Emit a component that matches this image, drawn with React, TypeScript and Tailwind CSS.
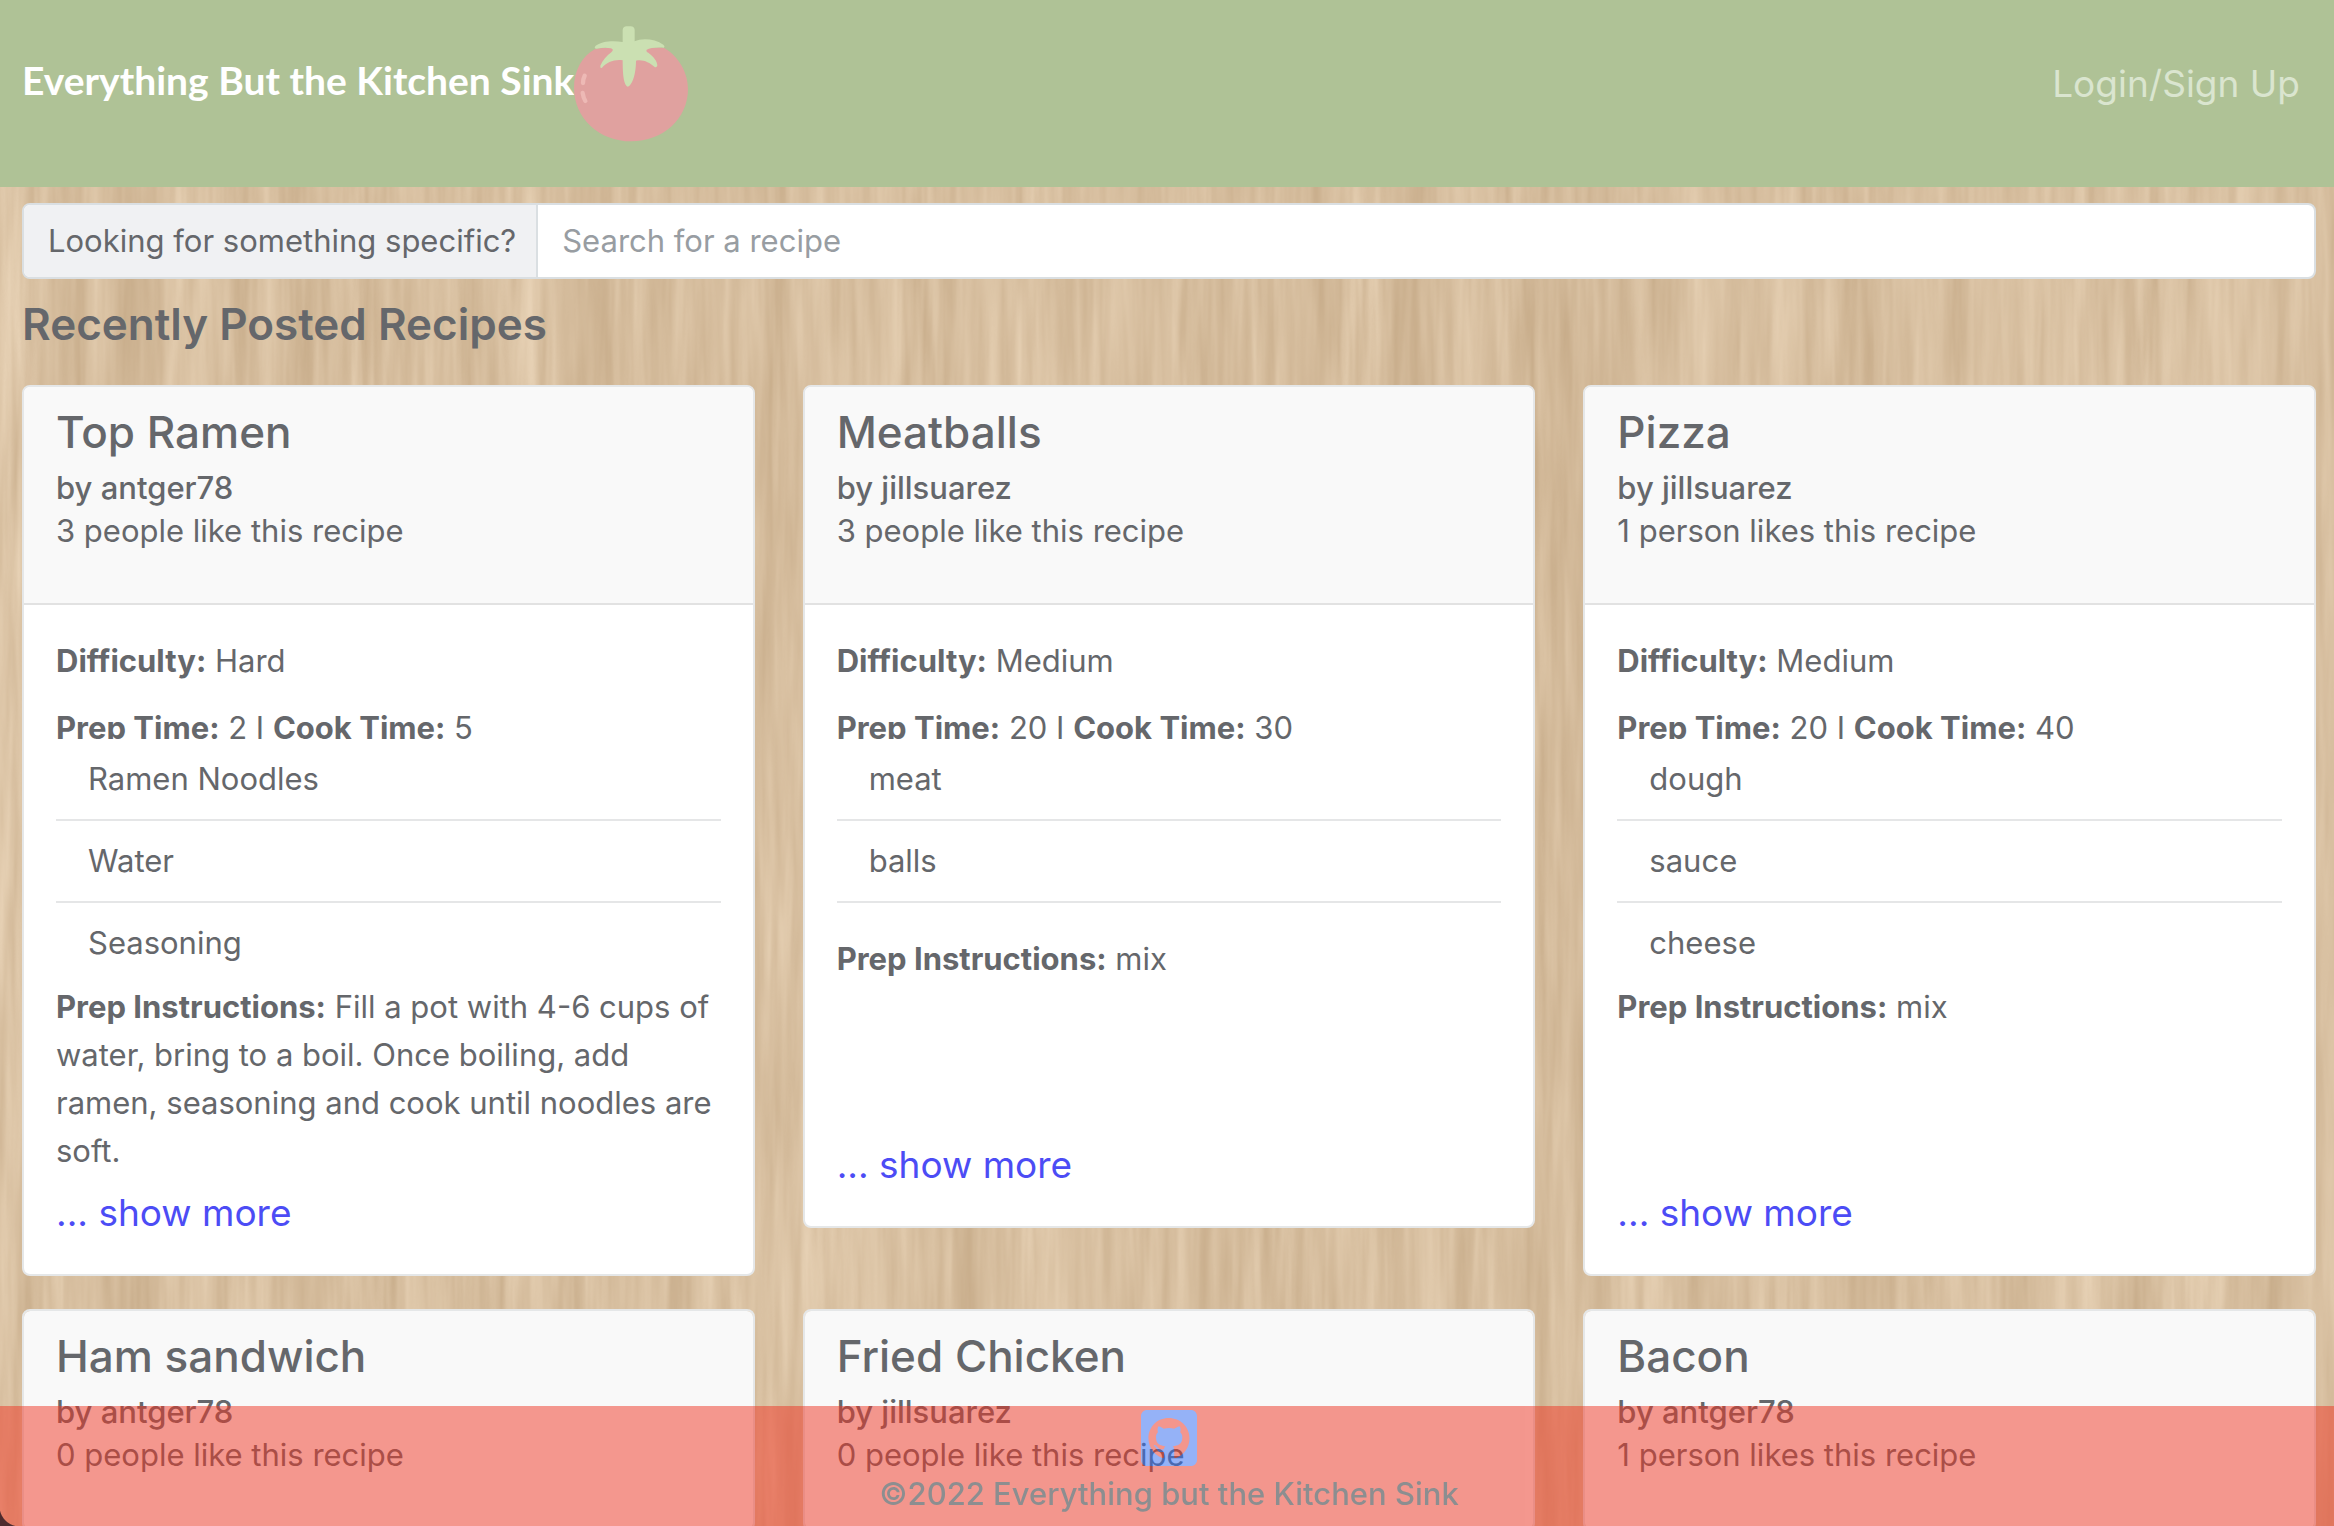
import { FaGithubSquare } from "react-icons/fa";

type Recipe = {
  title: string;
  author: string;
  likes: string;
  details?: {
    difficulty: string;
    prepTime: number;
    cookTime: number;
    ingredients: string[];
    instructions: string;
  };
};

const recipes: Recipe[] = [
  {
    title: "Top Ramen",
    author: "antger78",
    likes: "3 people like this recipe",
    details: {
      difficulty: "Hard",
      prepTime: 2,
      cookTime: 5,
      ingredients: ["Ramen Noodles", "Water", "Seasoning"],
      instructions:
        "Fill a pot with 4-6 cups of water, bring to a boil. Once boiling, add ramen, seasoning and cook until noodles are soft.",
    },
  },
  {
    title: "Meatballs",
    author: "jillsuarez",
    likes: "3 people like this recipe",
    details: {
      difficulty: "Medium",
      prepTime: 20,
      cookTime: 30,
      ingredients: ["meat", "balls"],
      instructions: "mix",
    },
  },
  {
    title: "Pizza",
    author: "jillsuarez",
    likes: "1 person likes this recipe",
    details: {
      difficulty: "Medium",
      prepTime: 20,
      cookTime: 40,
      ingredients: ["dough", "sauce", "cheese"],
      instructions: "mix",
    },
  },
  { title: "Ham sandwich", author: "antger78", likes: "0 people like this recipe" },
  { title: "Fried Chicken", author: "jillsuarez", likes: "0 people like this recipe" },
  { title: "Bacon", author: "antger78", likes: "1 person likes this recipe" },
];

function WoodGrain() {
  return (
    <svg aria-hidden="true" className="pointer-events-none absolute inset-0 -z-10 h-full w-full">
      <filter id="grain" x="0" y="0" width="100%" height="100%" colorInterpolationFilters="sRGB">
        <feTurbulence type="fractalNoise" baseFrequency="0.018 0.0006" numOctaves={2} seed={4} result="broad" />
        <feTurbulence type="fractalNoise" baseFrequency="0.08 0.005" numOctaves={3} seed={11} result="fine" />
        <feComposite in="broad" in2="fine" operator="arithmetic" k1={0} k2={0.5} k3={0.5} k4={0} result="mix" />
        <feColorMatrix
          in="mix"
          type="matrix"
          values="0.22 0 0 0 0.733  0.26 0 0 0 0.617  0.3 0 0 0 0.474  0 0 0 0 1"
        />
      </filter>
      <rect width="100%" height="100%" filter="url(#grain)" />
    </svg>
  );
}

function Tomato() {
  return (
    <svg aria-hidden="true" viewBox="0 0 342 346" className="h-[116px] w-[114px] shrink-0">
      <path
        d="M62 69C84 62 108 66 171 66C230 66 262 60 272 66C315 92 342 140 342 188C342 278 266 345 172 345C76 345 0 276 0 184C0 134 24 90 62 69Z"
        fill="#e0a19f"
      />
      <path
        d="M146 11Q147 0 158 0H170Q181 0 182 11V45C204 34 244 38 268 55Q274 60 270 64C250 62 228 64 218 70C216 74 218 77 223 79C238 90 250 104 250 118Q246 126 241 121C226 108 206 98 186 103C186 130 181 158 170 174Q161 188 154 174C147 158 146 130 146 102C122 98 98 108 84 124Q78 128 79 118C86 102 98 88 112 78C118 72 118 68 110 66C98 63 84 64 68 67Q58 66 65 58C84 44 118 42 146 47Z"
        fill="#cbe0b2"
      />
      <path d="M32 148Q27 158 27 170M26 200Q28 214 34 224" fill="none" stroke="#edb9b5" strokeWidth="13" strokeLinecap="round" />
    </svg>
  );
}

function RecipeCard({ recipe }: { recipe: Recipe }) {
  const d = recipe.details;
  return (
    <article className="overflow-hidden rounded-lg border-2 border-[#e5e7e8] bg-white">
      <header className="border-b-2 border-[#e2e2e2] bg-[#f9f9f9] px-8 pt-4 pb-12">
        <h3 className="mb-2 text-[44px] leading-[58px] font-medium">{recipe.title}</h3>
        <p className="text-[31px] leading-[38px] font-medium">by {recipe.author}</p>
        <p className="text-[31px] leading-[48px]">{recipe.likes}</p>
      </header>
      {d && (
        <div className="px-8 pt-8 pb-[31px] text-[31px] leading-[48px]">
          <p>
            <b>Difficulty:</b> {d.difficulty}
          </p>
          <p className="mt-[19px] h-[35px] overflow-hidden">
            <b>Prep Time:</b> {d.prepTime} I <b>Cook Time:</b> {d.cookTime}
          </p>
          <ul>
            {d.ingredients.map((name, i) => (
              <li key={name} className={i < 2 ? "border-b-2 border-[#e5e6e7] px-8 py-4" : "px-8 py-4"}>
                {name}
              </li>
            ))}
          </ul>
          <p className={d.ingredients.length < 3 ? "mt-8 min-h-48" : "min-h-48"}>
            <b>Prep Instructions:</b> {d.instructions}
          </p>
          <a href="#" className="mt-2 block text-[37px] leading-[60px] text-[#4c4cf5]">
            ... show more
          </a>
        </div>
      )}
    </article>
  );
}

export default function App() {
  return (
    <div className="relative isolate h-screen overflow-hidden font-[Inter,sans-serif] text-[#65676b]">
      <WoodGrain />
      <header className="flex items-center justify-between bg-[#afc296] pt-[26px] pr-[34px] pb-[45px] pl-[22px]">
        <a href="#" className="flex items-center font-['Lato',sans-serif] text-[39px] font-bold text-white">
          <span className="pb-2">Everything But the Kitchen Sink</span>
          <Tomato />
        </a>
        <a href="#" className="text-[37px] text-[#dae5cf]">
          Login/Sign Up
        </a>
      </header>

      <main className="pt-4 pr-[18px] pl-[22px]">
        <div className="flex overflow-hidden rounded-lg border-2 border-[#dadfe2] bg-white text-[31px] leading-[48px]">
          <label htmlFor="search" className="border-r-2 border-[#dadfe2] bg-[#f0f1f3] py-3 pr-5 pl-6">
            Looking for something specific?
          </label>
          <input
            id="search"
            type="text"
            placeholder="Search for a recipe"
            className="min-w-0 flex-1 px-6 outline-none placeholder:text-[#989da2]"
          />
        </div>
        <h2 className="mt-4 mb-8 text-[44px] leading-[58px] font-semibold">Recently Posted Recipes</h2>
        <section className="grid grid-cols-3 items-start gap-x-12 gap-y-[33px]">
          {recipes.map((r) => (
            <RecipeCard key={r.title} recipe={r} />
          ))}
        </section>
      </main>

      <footer className="absolute inset-x-0 bottom-0 flex h-[120px] flex-col items-center bg-[#ef3524] pr-[18px] pl-[22px] opacity-50">
        <a href="#" aria-label="GitHub" className="text-[#336df7]">
          <FaGithubSquare className="h-16 w-14" />
        </a>
        <p className="text-[31px] leading-[48px] font-medium text-[#212529]">
          ©2022 Everything but the Kitchen Sink
        </p>
      </footer>
      <div className="absolute bottom-0 left-0 size-5 bg-[radial-gradient(circle_at_top_right,transparent_20px,#4d2b2e_21px)]" />
    </div>
  );
}
